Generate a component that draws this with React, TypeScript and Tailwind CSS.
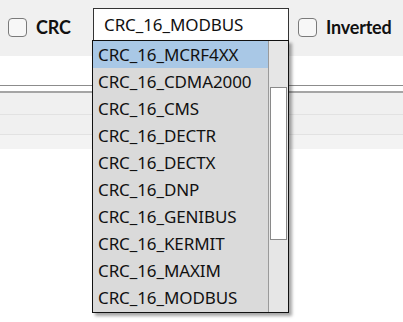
import { useState } from 'react';

const items = [
  'CRC_16_MCRF4XX',
  'CRC_16_CDMA2000',
  'CRC_16_CMS',
  'CRC_16_DECTR',
  'CRC_16_DECTX',
  'CRC_16_DNP',
  'CRC_16_GENIBUS',
  'CRC_16_KERMIT',
  'CRC_16_MAXIM',
  'CRC_16_MODBUS',
];

function Check({ label }: { label: string }) {
  return (
    <label className="flex items-center gap-[9px]">
      <span className="w-[19px] h-[19px] rounded-[4px] border border-[#7a7a7a] bg-[#f7f7f7]" />
      <span
        className="text-[18px] font-bold text-[#111] tracking-[-0.2px]"
        style={{ fontFamily: 'Lato, "Noto Sans", sans-serif' }}
      >
        {label}
      </span>
    </label>
  );
}

export default function App() {
  const [selected] = useState('CRC_16_MODBUS');
  const [hover] = useState(0);

  return (
    <div
      className="relative w-[403px] h-[322px] bg-white overflow-hidden"
      style={{ fontFamily: '"Noto Sans", "Open Sans", sans-serif' }}
    >
      {/* Toolbar */}
      <div className="h-[56px] bg-[#f0f0f0] flex items-start pl-[8px]">
        <div className="mt-[14px] w-[85px]">
          <Check label="CRC" />
        </div>
        <div className="mt-[8px] w-[196px] h-[33px] border border-[#333] bg-white flex items-center pl-[10px] text-[17px] tracking-[-0.1px] text-[#111]">
          {selected}
        </div>
        <div className="ml-[9px] mt-[14px]">
          <Check label="Inverted" />
        </div>
      </div>

      {/* Table area */}
      <div className="h-[29px]" />
      <div className="h-px bg-[#8c8c8c]" />
      <div className="h-[5px]" />
      <div className="h-[2px] bg-[#a5a5a5]" />
      <div className="h-[22px] bg-[#f0f0f0] border-b border-[#e2e2e2]" />
      <div className="h-[20px] bg-[#f0f0f0] border-b border-[#e2e2e2]" />
      <div className="h-[14px] bg-[#f3f3f3]" />

      {/* Dropdown list */}
      <div className="absolute left-[92px] top-[40px] w-[197px] h-[273px] border border-[#111] bg-[#dadada] shadow-[3px_3px_3px_rgba(0,0,0,0.35)] flex">
        <div className="flex-1 flex flex-col">
          {items.map((it, i) => (
            <div
              key={it}
              className={`h-[27px] flex items-center pl-[5px] text-[17px] tracking-[-0.1px] text-[#111] ${i === hover ? 'bg-[#a9c8e6]' : ''}`}
            >
              {it}
            </div>
          ))}
        </div>
        <div className="w-[20px] border-l border-[#9a9a9a] bg-[#e6e6e6] pt-[46px] pb-[72px] flex">
          <div className="flex-1 mx-[1px] border border-[#8a8a8a] bg-white" />
        </div>
      </div>
    </div>
  );
}
